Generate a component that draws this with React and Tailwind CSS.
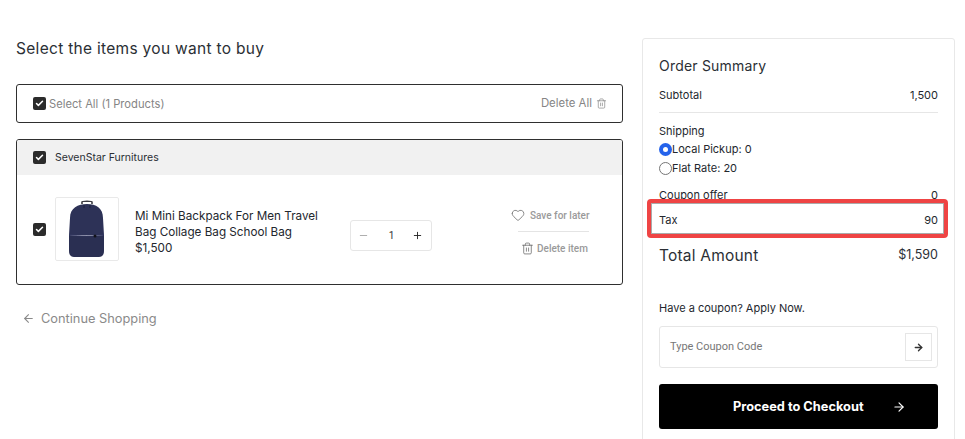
import { ArrowLeft, ArrowRight, Check, Heart, Minus, Plus, Trash2 } from "lucide-react";

const body = { fontFamily: '"Inter", "Noto Sans", sans-serif' };

const CheckBox = ({ className = "" }) => (
    <span className={`flex h-[13px] w-[13px] shrink-0 items-center justify-center rounded-[2px] bg-[#2b2b2b] ${className}`}>
        <Check className="h-[9px] w-[9px] text-white" strokeWidth={4} />
    </span>
);

const Backpack = () => (
    <svg viewBox="0 0 62 62" className="h-[62px] w-[62px]">
        <path d="M26 6 L26 4 C26 3 36 3 36 4 L36 6" fill="none" stroke="#3a3a40" strokeWidth="1.6" />
        <path d="M14 20 C14 10 22 6 31 6 C40 6 47 10 47 20 L48 37 L13 37 Z" fill="#2d3257" />
        <path d="M13 37 C23 38 38 38 48 37 L48 53 C48 57 46 59 43 59 L18 59 C15 59 13 57 13 53 Z" fill="#2a2f52" />
        <path d="M28 7 L28 10 M34 7 L34 10" stroke="#1f2340" strokeWidth="1.2" />
        <path d="M13 37 C23 38 38 38 48 37" fill="none" stroke="#3d4270" strokeWidth="0.6" />
        <circle cx="39" cy="38" r="1.5" fill="#12121a" />
    </svg>
);

const App = () => {
    return (
        <div style={body} className="flex h-[439px] items-start gap-[19px] overflow-hidden bg-white pl-4 pr-[10px] text-[#23272e]">
            <div className="w-[607px] shrink-0">
                <h1 className="mt-[38px] text-[15.5px] leading-[21px] font-normal tracking-[0.3px] text-[#2b2f35]">Select the items you want to buy</h1>

                <div className="mt-[25px] flex h-[39px] items-center justify-between rounded-[3px] border border-[#2f2f2f] pr-[15px] pl-4">
                    <div className="flex items-center gap-[3px]">
                        <CheckBox />
                        <span className="pt-px text-[11.2px] text-[#858585]">Select All (1 Products)</span>
                    </div>
                    <div className="flex items-center gap-1 pt-px text-[11.4px] text-[#858585]">
                        Delete All
                        <Trash2 className="h-[11px] w-[11px]" strokeWidth={1.5} />
                    </div>
                </div>

                <div className="mt-4 h-[146px] overflow-hidden rounded-[3px] border border-[#2f2f2f]">
                    <div className="flex h-[35px] items-center gap-[9px] bg-[#f1f1f1] pl-4">
                        <CheckBox />
                        <span className="text-[10.5px] text-[#2b2f35]">SevenStar Furnitures</span>
                    </div>
                    <div className="flex items-start pt-[22px]">
                        <CheckBox className="mt-[26px] ml-4" />
                        <div className="ml-[9px] flex h-[64px] w-[64px] shrink-0 items-center justify-center rounded-[2px] border border-[#e9e9e9]">
                            <Backpack />
                        </div>
                        <div className="mt-[11px] ml-4 w-[200px] text-[11.7px] leading-4 text-[#23272e]">
                            <p>Mi Mini Backpack For Men Travel</p>
                            <p>Bag Collage Bag School Bag</p>
                            <p>$1,500</p>
                        </div>
                        <div className="mt-[23px] ml-[15px] flex h-[31px] w-[82px] items-center justify-between rounded-[3px] border border-[#e6e6e6] pr-[8px] pl-[7px]">
                            <Minus className="h-[11px] w-[11px] text-[#8a8a8a]" strokeWidth={1.5} />
                            <span style={{ fontFamily: "Roboto, sans-serif" }} className="pl-[2px] text-[10px] text-[#333]">1</span>
                            <Plus className="h-[11px] w-[11px] text-[#222]" strokeWidth={2} />
                        </div>
                        <div style={{ fontFamily: "Roboto, sans-serif" }} className="mt-[7px] ml-[79px] flex w-[85px] flex-col items-start whitespace-nowrap text-[10px] font-medium text-[#9a9a9a]">
                            <div className="flex h-[22px] items-center gap-[5px]">
                                <Heart className="h-[14px] w-[14px] text-[#666]" strokeWidth={1.3} />
                                <span>Save for later</span>
                            </div>
                            <div className="mt-[5px] ml-[7px] h-px w-[71px] bg-[#e4e4e4]" />
                            <div className="mt-[4px] ml-[10px] flex h-[24px] items-center gap-[3px]">
                                <Trash2 className="h-[13px] w-[13px] text-[#666]" strokeWidth={1.4} />
                                <span>Delete item</span>
                            </div>
                        </div>
                    </div>
                </div>

                <div className="mt-[24px] flex items-center gap-[6px] pl-[6px] text-[12.8px] text-[#8a8a8a]">
                    <ArrowLeft className="h-[13px] w-[13px]" strokeWidth={2} />
                    <span>Continue Shopping</span>
                </div>
            </div>

            <div className="relative mt-[38px] h-[420px] w-[313px] shrink-0 rounded-[3px] border border-[#e8e8e8] px-4">
                <h2 className="mt-[17px] text-[14px] leading-[20px] tracking-[0.2px] text-[#2b2f35]">Order Summary</h2>
                <div className="mt-[11px] flex h-[16px] items-center justify-between text-[11px]">
                    <span>Subtotal</span>
                    <span>1,500</span>
                </div>
                <div className="mt-[9px] h-px bg-[#e6e6e6]" />
                <p className="mt-[10px] text-[11px] leading-4">Shipping</p>
                <div className="mt-[2px] flex h-[17px] items-center text-[11px]">
                    <span className="flex h-[13px] w-[13px] items-center justify-center rounded-full bg-[#2563eb]">
                        <span className="h-[5px] w-[5px] rounded-full bg-white" />
                    </span>
                    <span>Local Pickup: 0</span>
                </div>
                <div className="mt-[2px] flex h-[17px] items-center text-[11px]">
                    <span className="h-[13px] w-[13px] rounded-full border border-[#767676]" />
                    <span>Flat Rate: 20</span>
                </div>
                <div className="mt-[10px] flex h-[16px] items-center justify-between text-[11px]">
                    <span>Coupon offer</span>
                    <span>0</span>
                </div>
                <div className="mt-[9px] flex h-[16px] items-center justify-between text-[11px]">
                    <span>Tax</span>
                    <span>90</span>
                </div>
                <div className="mt-[17px] flex items-center justify-between text-[#2b2f35]">
                    <span className="text-[15.5px] leading-[20px] tracking-[0.2px]">Total Amount</span>
                    <span className="pb-[2px] text-[12.5px] leading-[20px]">$1,590</span>
                </div>
                <p className="mt-[33px] text-[11px] leading-4">Have a coupon? Apply Now.</p>
                <div className="mt-[10px] flex h-[42px] items-center justify-between rounded-[3px] border border-[#e6e6e6] pr-[5px] pl-[10px]">
                    <span style={{ fontFamily: "Roboto, sans-serif" }} className="pt-px text-[11px] text-[#777]">Type Coupon Code</span>
                    <span className="flex h-[28px] w-[27px] items-center justify-center border border-[#e6e6e6]">
                        <ArrowRight className="h-[11px] w-[11px] text-[#333]" strokeWidth={3} />
                    </span>
                </div>
                <button className="mt-4 flex h-[45px] w-full items-center rounded-[3px] bg-black pl-[74px] text-[12.8px] font-bold text-white">
                    Proceed to Checkout
                    <ArrowRight className="ml-[28px] h-[14px] w-[14px]" strokeWidth={2} />
                </button>

                <div className="absolute top-[160px] left-[4px] h-[39px] w-[301px] rounded-[4px] border-[4px] border-[#ef4444] shadow-[inset_0_0_0_1px_#aaaaaa]" />
            </div>
        </div>
    );
};

export default App;
